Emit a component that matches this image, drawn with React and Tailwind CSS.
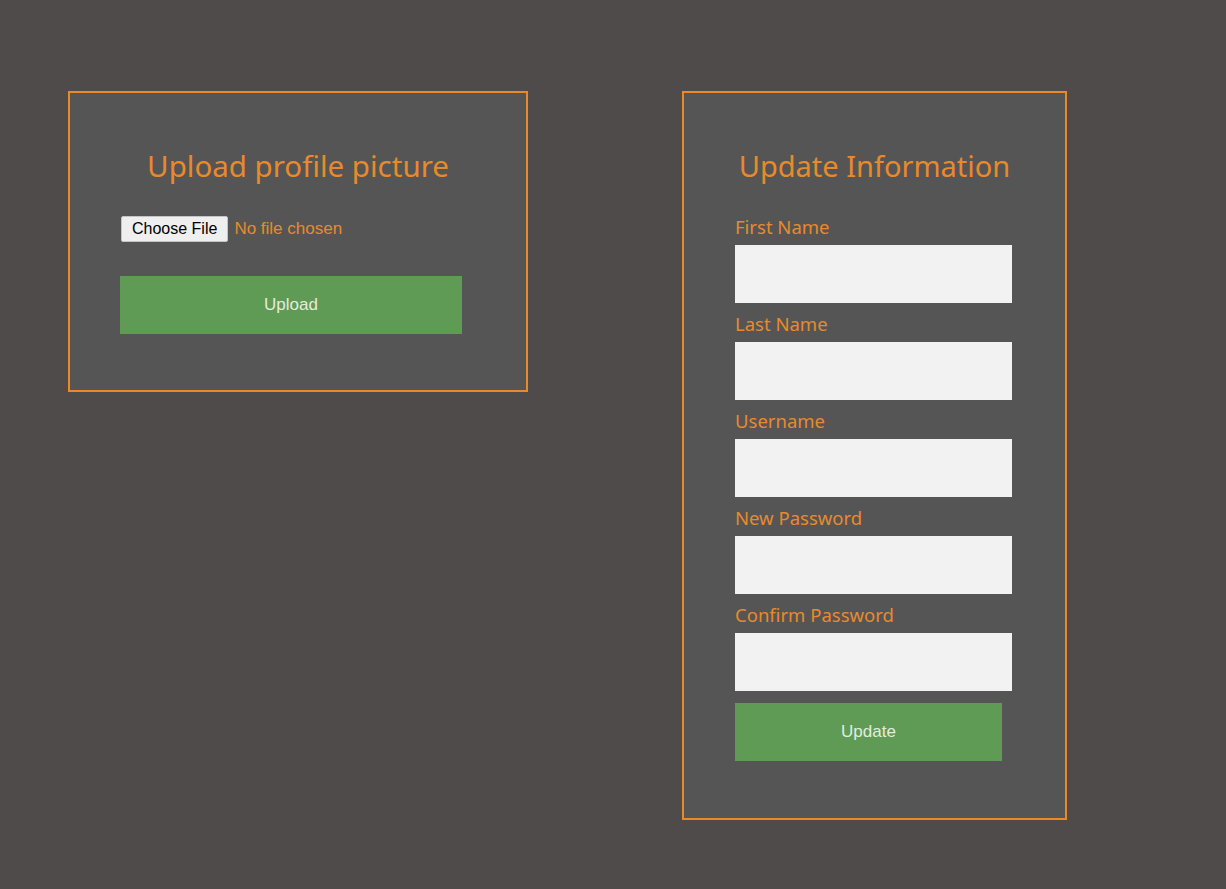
const fields = ["First Name", "Last Name", "Username", "New Password", "Confirm Password"];

const App = () => (
  <div className="min-h-screen bg-[#4f4b4a] pt-[91px] pl-[68px]" style={{ fontFamily: '"Noto Sans", "Open Sans", sans-serif' }}>
    <div className="flex items-start gap-[154px]">
      <div className="w-[460px] border-2 border-[#e88a2c] bg-[#555555] pt-[55px] pb-[56px]">
        <h2 className="text-center whitespace-nowrap text-[29.5px] leading-[36px] text-[#e88a2c]">Upload profile picture</h2>
        <div className="pl-[50px]">
          <div className="mt-[32px] flex items-center h-[26px]" style={{ fontFamily: '"Liberation Sans", Arial, sans-serif' }}>
            <button className="h-[26px] px-[10px] ml-px bg-[#efefef] border border-[#c4c4c4] rounded-[2px] text-[16px] text-black leading-none">Choose File</button>
            <span className="ml-[6px] text-[17px] text-[#e88a2c]">No file chosen</span>
          </div>
          <button className="mt-[34px] w-[342px] h-[58px] bg-[#5f9b55] text-[17px] text-[#e4ecdf]" style={{ fontFamily: '"Liberation Sans", Arial, sans-serif' }}>Upload</button>
        </div>
      </div>

      <div className="w-[385px] border-2 border-[#e88a2c] bg-[#555555] pt-[55px] pb-[57px]">
        <h2 className="text-center whitespace-nowrap text-[29px] leading-[36px] text-[#e88a2c]">Update Information</h2>
        <div className="pl-[51px]">
          <div className="mt-[31px] flex flex-col">
            {fields.map((f, i) => (
              <div key={f} className={i > 0 ? "mt-[9px]" : ""}>
                <label className="block text-[18.5px] leading-[24px] text-[#e88a2c]">{f}</label>
                <input type={f.includes("Password") ? "password" : "text"} className="mt-[6px] block w-[277px] h-[58px] bg-[#f2f2f2] outline-none px-3" />
              </div>
            ))}
          </div>
          <button className="mt-[12px] w-[267px] h-[58px] bg-[#5f9b55] text-[17px] text-[#e4ecdf]" style={{ fontFamily: '"Liberation Sans", Arial, sans-serif' }}>Update</button>
        </div>
      </div>
    </div>
  </div>
);

export default App;
